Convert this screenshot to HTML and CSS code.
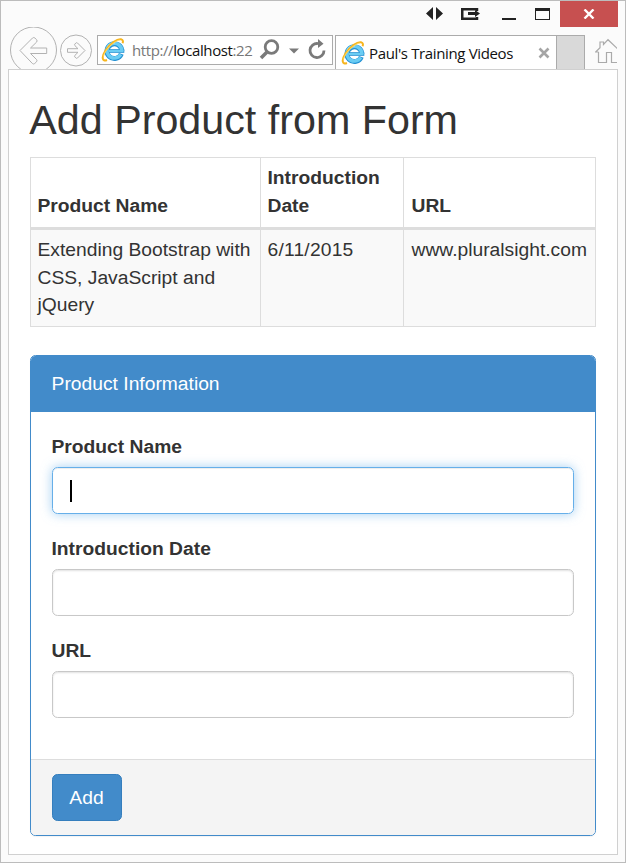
FILE: index.html
```html
<!DOCTYPE html>
<html lang="en">
<head>
<meta charset="utf-8">
<title>Paul's Training Videos</title>
<link rel="stylesheet" href="styles.css">
</head>
<body>
<div class="window">
  <header class="titlebar">
    <svg class="title-icons" width="130" height="26" viewBox="0 0 130 26">
      <path fill="#222" d="M7 7v13L0 13.500zM10 7v13l7-6.500z"/>
      <path fill="none" stroke="#222" stroke-width="2.500" d="M51 11V9.250H36.250V18.750H51V17"/>
      <path fill="#222" d="M42 12h7V10l5 3.500-5 3.500V15h-7z"/>
      <path fill="#222" d="M76 18h14v2H76z"/>
      <path fill="#222" fill-rule="evenodd" d="M109 8h15v12h-15zM110 11v8h13v-8z"/>
    </svg>
    <div class="close">
      <svg width="12" height="10" viewBox="0 0 12 10"><path d="M1.500 .5l9 9M10.500 .5l-9 9" stroke="#fff" stroke-width="2.400"/></svg>
    </div>
  </header>
  <nav class="toolbar">
    <svg class="history" width="84" height="42" viewBox="0 0 84 42" fill="none" stroke="#b2b2b2">
      <circle cx="23.500" cy="23" r="23"/>
      <path d="M10 23.500L22.500 11q1.200-1 2.400 0l1.700 1.700q1 1.200 0 2.400L20.500 21H36.700v5.500H20.500l6 6q1 1.200 0 2.300l-1.800 1.700q-1.100 1-2.300 0z"/>
      <circle cx="66" cy="23.500" r="15.500"/>
      <path d="M75 23.500l-7.500 7.500q-.8.800-1.600 0l-1-1q-.8-.8 0-1.600l3.100-3.100H57.500v-3.600H68l-3.100-3.100q-.8-.8 0-1.600l1-1q.8-.8 1.600 0z"/>
    </svg>
    <div class="address">
      <svg class="ie" width="24" height="24" viewBox="0 0 24 24" fill="none">
        <path d="M20.300 15.800A7.400 7.400 0 1 1 20.800 13" stroke="#2391d3" stroke-width="5"/>
        <path d="M8 13h15.300" stroke="#2391d3" stroke-width="3.600"/>
        <path d="M19.800 16.400A7.400 7.400 0 1 1 20.800 13" stroke="#6accf3" stroke-width="3.400"/>
        <path d="M8 13h14.500" stroke="#6accf3" stroke-width="2"/>
        <path d="M6.500 9Q9 5.400 13.500 5" stroke="#b4e8fb" stroke-width="1.400"/>
        <path d="M6 22C1 24 .2 19 4.500 12.500 9.500 5 16.500.6 20 1.300c2.500.6 2 2.700 1.600 4" stroke="#f7b51d" stroke-width="2"/>
        <path d="M2.500 18.500C4 12 11 4.500 18.500 2" stroke="#ffe078" stroke-width=".8"/>
      </svg>
      <span class="url">http://<b>localhost</b>:22</span>
      <svg class="address-icons" width="70" height="24" viewBox="0 0 70 24" fill="none" stroke="#7a7a7a">
        <circle cx="13.500" cy="9" r="6.300" stroke-width="2.800"/>
        <path d="M9.500 13.500l-6.500 6.500" stroke-width="3.500"/>
        <path d="M31 10.500h10l-5 5z" fill="#7a7a7a" stroke="none"/>
        <path d="M66 12.500a7 7 0 1 1-6-6.900" stroke-width="2.800"/>
        <path d="M60 1l5.500 4.700L60 10z" fill="#7a7a7a" stroke="none"/>
      </svg>
    </div>
    <div class="tab">
      <svg class="ie" width="24" height="24" viewBox="0 0 24 24" fill="none">
        <path d="M20.300 15.800A7.400 7.400 0 1 1 20.800 13" stroke="#2391d3" stroke-width="5"/>
        <path d="M8 13h15.300" stroke="#2391d3" stroke-width="3.600"/>
        <path d="M19.800 16.400A7.400 7.400 0 1 1 20.800 13" stroke="#6accf3" stroke-width="3.400"/>
        <path d="M8 13h14.500" stroke="#6accf3" stroke-width="2"/>
        <path d="M6.500 9Q9 5.400 13.500 5" stroke="#b4e8fb" stroke-width="1.400"/>
        <path d="M6 22C1 24 .2 19 4.500 12.500 9.500 5 16.500.6 20 1.300c2.500.6 2 2.700 1.600 4" stroke="#f7b51d" stroke-width="2"/>
        <path d="M2.500 18.500C4 12 11 4.500 18.500 2" stroke="#ffe078" stroke-width=".8"/>
      </svg>
      <span class="tab-title">Paul's Training Videos</span>
      <svg class="tab-close" width="12" height="12" viewBox="0 0 12 12"><path d="M1.500 1.500l9 9M10.500 1.500l-9 9" stroke="#a5a5a5" stroke-width="2.600"/></svg>
    </div>
    <div class="new-tab"></div>
    <svg class="home" width="22" height="26" viewBox="0 0 22 26" fill="none" stroke="#aaa" stroke-width="1.200">
      <path d="M3.500 14v10.500h8v-10h5v10h8V14M3.500 14H.7L5 9.800V4h3.500v2.400L13 1.700 26 14"/>
    </svg>
  </nav>
  <main class="page">
    <h1>Add Product from Form</h1>
    <table>
      <colgroup><col class="c-name"><col class="c-date"><col class="c-url"></colgroup>
      <thead><tr><th>Product Name</th><th>Introduction Date</th><th>URL</th></tr></thead>
      <tbody><tr><td>Extending Bootstrap with CSS, JavaScript and jQuery</td><td><span class="date">6/11/2015</span></td><td>www.pluralsight.com</td></tr></tbody>
    </table>
    <form class="panel">
      <div class="panel-heading">Product Information</div>
      <div class="panel-body">
        <div class="group"><label>Product Name</label><div class="input focused"><i class="caret"></i></div></div>
        <div class="group"><label>Introduction Date</label><div class="input"></div></div>
        <div class="group"><label>URL</label><div class="input"></div></div>
      </div>
      <div class="panel-footer"><button type="button">Add</button></div>
    </form>
  </main>
</div>
</body>
</html>
```
FILE: styles.css
```css
* { box-sizing: border-box; }
body {
  margin: 0;
  font: 19.25px/27.5px "Liberation Sans", Arial, sans-serif;
  color: #333;
}
svg { display: block; flex: none; }
.window {
  width: 626px;
  height: 863px;
  border: 1px solid #bcbcbc;
  background: #fbfbfb;
  display: flex;
  flex-direction: column;
}
.titlebar {
  height: 26px;
  flex: none;
  display: flex;
  justify-content: flex-end;
  padding-right: 7px;
}
.title-icons { margin: -1px 4px 0 0; }
.close {
  width: 58px;
  height: 26px;
  background: #c75050;
  display: flex;
  align-items: center;
  justify-content: center;
  padding-right: 1px;
}
.toolbar {
  height: 42px;
  flex: none;
  display: flex;
  padding-left: 9px;
  font-family: "Open Sans", "Noto Sans", sans-serif;
  font-size: 15px;
}
.address {
  margin: 8px 0 0 3px;
  width: 236px;
  height: 30px;
  border: 1px solid #ababab;
  background: #fff;
  display: flex;
  padding: 2px 0 0 3px;
}
.url {
  width: 122px;
  margin-left: 7px;
  line-height: 25px;
  letter-spacing: -.4px;
  color: #777;
  white-space: nowrap;
}
.url b { font-weight: 400; color: #111; }
.address-icons { margin-left: 4px; }
.tab {
  margin: 8px 0 0 2px;
  width: 222px;
  height: 34px;
  border: 1px solid #ababab;
  border-bottom: 0;
  background: #fff;
  display: flex;
  padding: 5px 0 0 5px;
}
.tab-title {
  width: 169px;
  margin-left: 4px;
  line-height: 25px;
  letter-spacing: -.36px;
  color: #111;
  white-space: nowrap;
}
.tab-close { margin-top: 6px; }
.new-tab {
  margin-top: 8px;
  width: 28px;
  height: 34px;
  border-top: 1px solid #ababab;
  border-right: 1px solid #ababab;
  background: #d9d9d9;
}
.home { margin: 11px 0 0 10px; }
.page {
  margin: 0 7px;
  height: 786px;
  flex: none;
  border: 1px solid #d0d0d0;
  background: #fff;
  padding: 28px 21px 0;
}
h1 {
  margin: 0 0 14px -.7px;
  font-size: 41.25px;
  line-height: 45px;
  font-weight: 400;
}
table {
  width: 566px;
  table-layout: fixed;
  border-collapse: separate;
  border-spacing: 0;
  border: solid #ddd;
  border-width: 1px 0 0 1px;
}
.c-name { width: 230px; }
.c-date { width: 143px; }
.c-url { width: 192px; }
th, td {
  padding: 6px 0 0 6.500px;
  text-align: left;
  vertical-align: top;
  border: solid #ddd;
  border-width: 0 1px 1px 0;
}
th { height: 72px; vertical-align: bottom; padding-bottom: 8px; border-bottom-width: 3px; }
td { height: 97px; background: #f9f9f9; }
th:last-child, td:last-child { padding-left: 7.500px; }
.date { letter-spacing: .2px; }
.panel {
  margin: 28px 0 0;
  width: 566px;
  height: 481px;
  border: 1px solid #428bca;
  border-radius: 5.500px;
  box-shadow: 0 1px 1px rgba(0, 0, 0, .05);
  overflow: hidden;
}
.panel-heading {
  height: 56px;
  padding: 14px 20.600px;
  background: #428bca;
  color: #fff;
}
.panel-body { height: 347px; padding: 20.600px 21px 0; }
.group { height: 102px; }
label {
  display: block;
  height: 34.400px;
  margin-left: -.5px;
  font-weight: 700;
}
.input {
  height: 47px;
  border: 1px solid #c8c8c8;
  border-radius: 5.500px;
  box-shadow: inset 0 1px 2px rgba(0, 0, 0, .12);
  padding: 12px 17px;
}
.focused {
  border-color: #66afe9;
  box-shadow: inset 0 1px 1px rgba(0, 0, 0, .075), 0 0 11px rgba(102, 175, 233, .6);
}
.caret { display: block; width: 2px; height: 22px; background: #000; }
.panel-footer {
  height: 76px;
  padding: 14px 21px;
  border-top: 1px solid #ddd;
  background: #f4f4f4;
}
button {
  display: block;
  width: 70px;
  height: 47px;
  padding: 0 1px 0 0;
  border: 1px solid #357ebd;
  border-radius: 5.500px;
  background: #428bca;
  color: #fff;
  font: inherit;
}
```
